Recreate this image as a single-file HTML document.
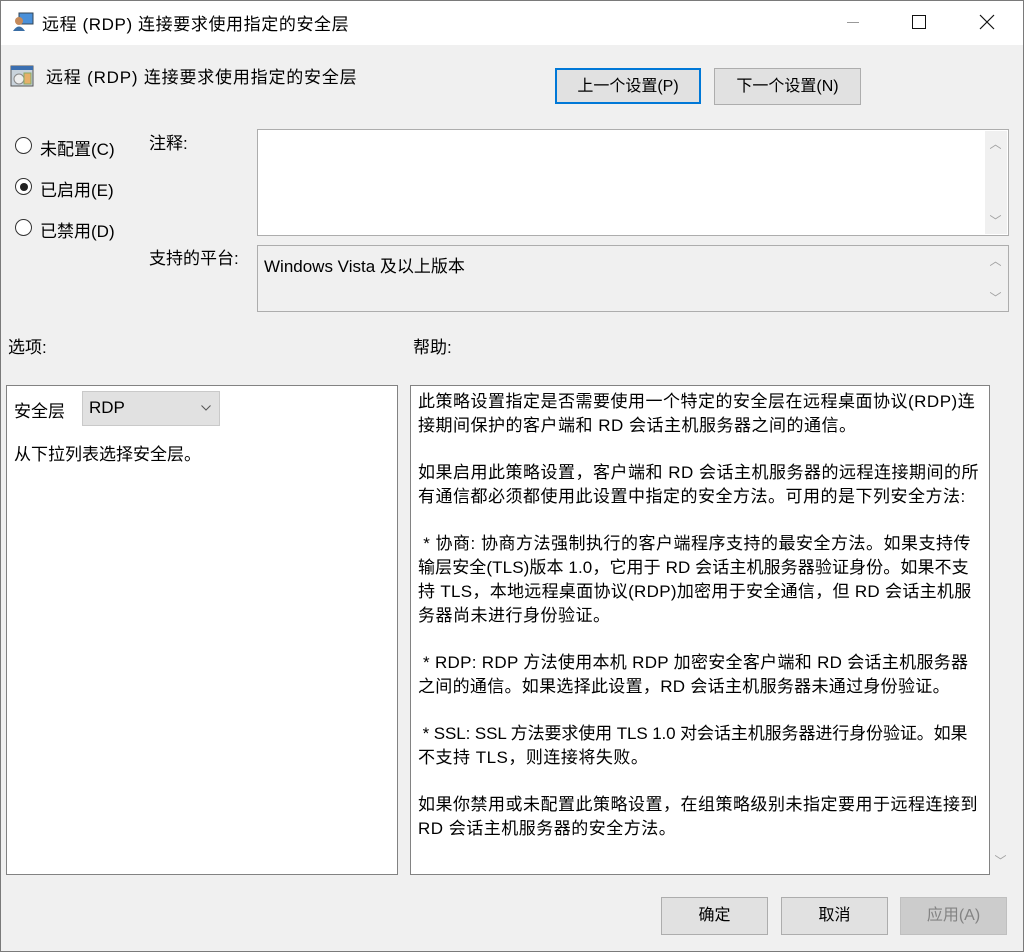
<!DOCTYPE html>
<html><head><meta charset="utf-8"><style>
*{margin:0;padding:0;box-sizing:border-box}
body{width:1024px;height:952px;background:#f0f0f0;font-family:"Liberation Sans","Noto Sans CJK SC",sans-serif;font-size:17px;color:#000;position:relative;overflow:hidden}
.a{position:absolute;white-space:nowrap}
.frame{position:absolute;left:0;top:0;width:1024px;height:952px;border:1px solid #7a7a7a;pointer-events:none}
.btn{position:absolute;background:#e1e1e1;border:1px solid #adadad;text-align:center;font-size:16px}
.sb{position:absolute;width:17px;color:#a0a0a0;font-size:12px;text-align:center}
.radio{position:absolute;width:17px;height:17px;border:1px solid #333;border-radius:50%;background:#fff}
.h{position:absolute;left:418px;white-space:nowrap;letter-spacing:0.5px}
</style></head><body>
<div class="a" style="left:0;top:0;width:1024px;height:45px;background:#fff"></div>
<svg class="a" style="left:12px;top:12px" width="22" height="20"><rect x="7" y="1" width="14" height="11" fill="#4a90d9" stroke="#345"/><circle cx="7" cy="9" r="4" fill="#c58a5a"/><path d="M1 19 Q7 10 13 19Z" fill="#3a6ea5"/></svg>
<div class="a" style="left:42px;top:10px;font-size:17px;letter-spacing:0.6px">远程 (RDP) 连接要求使用指定的安全层</div>
<div class="a" style="left:847px;top:22px;width:12px;height:1px;background:#999"></div>
<div class="a" style="left:912px;top:15px;width:14px;height:14px;border:1px solid #111"></div>
<svg class="a" style="left:979px;top:14px" width="16" height="16"><path d="M1 1L15 15M15 1L1 15" stroke="#111" stroke-width="1.2"/></svg>

<svg class="a" style="left:10px;top:64px" width="24" height="24"><rect x="1" y="2" width="22" height="20" fill="#c9d3dc" stroke="#555"/><rect x="1" y="2" width="22" height="4" fill="#3b6fb0"/><circle cx="9" cy="15" r="5" fill="#eee" stroke="#888"/><rect x="14" y="9" width="7" height="11" fill="#e6b06a" stroke="#8a6"/></svg>
<div class="a" style="left:46px;top:63px;letter-spacing:0.8px">远程 (RDP) 连接要求使用指定的安全层</div>

<div class="btn" style="left:555px;top:68px;width:146px;height:36px;border:2px solid #0078d7;line-height:34px">上一个设置(P)</div>
<div class="btn" style="left:714px;top:68px;width:147px;height:37px;line-height:36px">下一个设置(N)</div>

<div class="radio" style="left:15px;top:137px"></div>
<div class="a" style="left:40px;top:135px">未配置(C)</div>
<div class="radio" style="left:15px;top:178px"></div>
<div class="a" style="left:20px;top:183px;width:8px;height:8px;border-radius:50%;background:#222"></div>
<div class="a" style="left:40px;top:176px">已启用(E)</div>
<div class="radio" style="left:15px;top:219px"></div>
<div class="a" style="left:40px;top:217px">已禁用(D)</div>

<div class="a" style="left:149px;top:129px">注释:</div>
<div class="a" style="left:257px;top:129px;width:752px;height:107px;background:#fff;border:1px solid #adadad"></div>
<div class="a" style="left:985px;top:131px;width:22px;height:103px;background:#f0f0f0"></div>
<div class="sb" style="left:987px;top:135px">︿</div>
<div class="sb" style="left:987px;top:212px">﹀</div>

<div class="a" style="left:149px;top:244px">支持的平台:</div>
<div class="a" style="left:257px;top:245px;width:752px;height:67px;background:#f0f0f0;border:1px solid #adadad"></div>
<div class="a" style="left:264px;top:252px">Windows Vista 及以上版本</div>
<div class="sb" style="left:987px;top:252px">︿</div>
<div class="sb" style="left:987px;top:289px">﹀</div>

<div class="a" style="left:8px;top:333px">选项:</div>
<div class="a" style="left:413px;top:333px">帮助:</div>

<div class="a" style="left:6px;top:385px;width:392px;height:490px;background:#fff;border:1px solid #828282"></div>
<div class="a" style="left:14px;top:397px">安全层</div>
<div class="a" style="left:82px;top:391px;width:138px;height:35px;background:#e1e1e1;border:1px solid #c9c9c9"></div>
<div class="a" style="left:89px;top:398px">RDP</div>
<svg class="a" style="left:201px;top:405px" width="10" height="6"><path d="M0.5 0.5L5 5L9.5 0.5" stroke="#555" fill="none"/></svg>
<div class="a" style="left:14px;top:440px">从下拉列表选择安全层。</div>

<div class="a" style="left:410px;top:385px;width:580px;height:490px;background:#fff;border:1px solid #828282"></div>
<div class="h" style="top:387px">此策略设置指定是否需要使用一个特定的安全层在远程桌面协议(RDP)连</div>
<div class="h" style="top:411px">接期间保护的客户端和 RD 会话主机服务器之间的通信。</div>
<div class="h" style="top:458px">如果启用此策略设置，客户端和 RD 会话主机服务器的远程连接期间的所</div>
<div class="h" style="top:482px">有通信都必须都使用此设置中指定的安全方法。可用的是下列安全方法:</div>
<div class="h" style="top:529px">&nbsp;* 协商: 协商方法强制执行的客户端程序支持的最安全方法。如果支持传</div>
<div class="h" style="top:553px;letter-spacing:0.1px">输层安全(TLS)版本 1.0，它用于 RD 会话主机服务器验证身份。如果不支</div>
<div class="h" style="top:577px;letter-spacing:0.3px">持 TLS，本地远程桌面协议(RDP)加密用于安全通信，但 RD 会话主机服</div>
<div class="h" style="top:601px">务器尚未进行身份验证。</div>
<div class="h" style="top:648px;letter-spacing:0.3px">&nbsp;* RDP: RDP 方法使用本机 RDP 加密安全客户端和 RD 会话主机服务器</div>
<div class="h" style="top:672px;letter-spacing:0.3px">之间的通信。如果选择此设置，RD 会话主机服务器未通过身份验证。</div>
<div class="h" style="top:719px;letter-spacing:-0.1px">&nbsp;* SSL: SSL 方法要求使用 TLS 1.0 对会话主机服务器进行身份验证。如果</div>
<div class="h" style="top:743px">不支持 TLS，则连接将失败。</div>
<div class="h" style="top:790px">如果你禁用或未配置此策略设置，在组策略级别未指定要用于远程连接到</div>
<div class="h" style="top:814px">RD 会话主机服务器的安全方法。</div>
<div class="sb" style="left:992px;top:852px">﹀</div>

<div class="btn" style="left:661px;top:897px;width:107px;height:38px;line-height:36px">确定</div>
<div class="btn" style="left:781px;top:897px;width:107px;height:38px;line-height:36px">取消</div>
<div class="btn" style="left:900px;top:897px;width:107px;height:38px;line-height:36px;background:#ccc;border-color:#bfbfbf;color:#838383">应用(A)</div>
<div class="frame"></div>
</body></html>
